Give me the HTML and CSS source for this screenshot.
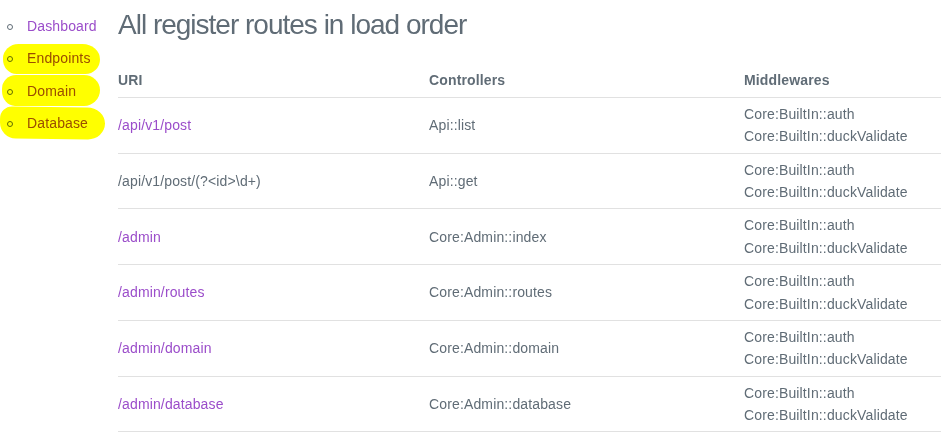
FILE: index.html
```html
<!DOCTYPE html>
<html lang="en">
<head>
<meta charset="utf-8">
<title>Routes</title>
<link rel="stylesheet" href="styles.css">
</head>
<body>
<div class="layout">
  <nav class="sidebar">
    <ul class="nav-list">
      <li class="nav-item"><a href="#">Dashboard</a></li>
      <li class="nav-item hl hl-1"><a href="#">Endpoints</a></li>
      <li class="nav-item hl hl-2"><a href="#">Domain</a></li>
      <li class="nav-item hl hl-3"><a href="#">Database</a></li>
    </ul>
  </nav>
  <main class="main">
    <h3 class="title">All register routes in load order</h3>
    <table class="routes">
      <colgroup>
        <col class="c-uri">
        <col class="c-ctrl">
        <col class="c-mw">
      </colgroup>
      <thead>
        <tr><th>URI</th><th>Controllers</th><th>Middlewares</th></tr>
      </thead>
      <tbody>
        <tr>
          <td><a href="#">/api/v1/post</a></td>
          <td>Api::list</td>
          <td>Core:BuiltIn::auth<br>Core:BuiltIn::duckValidate</td>
        </tr>
        <tr>
          <td>/api/v1/post/(?&lt;id&gt;\d+)</td>
          <td>Api::get</td>
          <td>Core:BuiltIn::auth<br>Core:BuiltIn::duckValidate</td>
        </tr>
        <tr>
          <td><a href="#">/admin</a></td>
          <td>Core:Admin::index</td>
          <td>Core:BuiltIn::auth<br>Core:BuiltIn::duckValidate</td>
        </tr>
        <tr>
          <td><a href="#">/admin/routes</a></td>
          <td>Core:Admin::routes</td>
          <td>Core:BuiltIn::auth<br>Core:BuiltIn::duckValidate</td>
        </tr>
        <tr>
          <td><a href="#">/admin/domain</a></td>
          <td>Core:Admin::domain</td>
          <td>Core:BuiltIn::auth<br>Core:BuiltIn::duckValidate</td>
        </tr>
        <tr>
          <td><a href="#">/admin/database</a></td>
          <td>Core:Admin::database</td>
          <td>Core:BuiltIn::auth<br>Core:BuiltIn::duckValidate</td>
        </tr>
      </tbody>
    </table>
  </main>
</div>
</body>
</html>
```

FILE: styles.css
```css
html, body {
  margin: 0;
  padding: 0;
  background: #ffffff;
}

body {
  font-family: "Liberation Sans", Arial, sans-serif;
  font-size: 14px;
  line-height: 1.6;
  letter-spacing: 0.01em;
  color: #606c76;
}

a {
  color: #9b4dca;
  text-decoration: none;
}

.layout {
  display: flex;
  align-items: flex-start;
}

.sidebar {
  flex: 0 0 118px;
  width: 118px;
}

.nav-list {
  margin: 0;
  padding: 10px 0 0 27px;
  list-style: none;
}

.nav-item {
  position: relative;
  padding: 5px 0;
}

/* circle bullet */
.nav-item::before {
  content: "";
  position: absolute;
  left: -20px;
  top: 14px;
  width: 4px;
  height: 4px;
  border: 1px solid #606c76;
  border-radius: 50%;
}

/* highlighter marks */
.hl::after {
  content: "";
  position: absolute;
  background: #ffff00;
  mix-blend-mode: multiply;
  pointer-events: none;
}

.hl-1::after {
  left: -24px;
  top: 2px;
  width: 97px;
  height: 30px;
  border-radius: 16px 18px 15px 14px / 15px 16px 15px 15px;
}

.hl-2::after {
  left: -25px;
  top: 0;
  width: 98px;
  height: 31px;
  border-radius: 14px 16px 16px 13px / 14px 15px 16px 15px;
}

.hl-3::after {
  left: -27px;
  top: 0;
  width: 105px;
  height: 32px;
  border-radius: 12px 18px 17px 16px / 12px 16px 16px 16px;
  transform: rotate(0.8deg);
}

.main {
  flex: 1 1 auto;
  min-width: 0;
  padding-top: 7px;
}

.title {
  margin: 0 0 21px;
  font-size: 28px;
  font-weight: 400;
  line-height: 1.3;
  letter-spacing: -1px;
  color: #606c76;
}

.routes {
  width: 100%;
  border-collapse: collapse;
  border-spacing: 0;
  table-layout: fixed;
}

.c-uri { width: 311px; }
.c-ctrl { width: 315px; }

.routes th,
.routes td {
  padding: 5px 15px 5px 0;
  text-align: left;
  vertical-align: middle;
  border-bottom: 1px solid #e1e1e1;
  white-space: nowrap;
}

.routes th {
  font-weight: 700;
}
```
